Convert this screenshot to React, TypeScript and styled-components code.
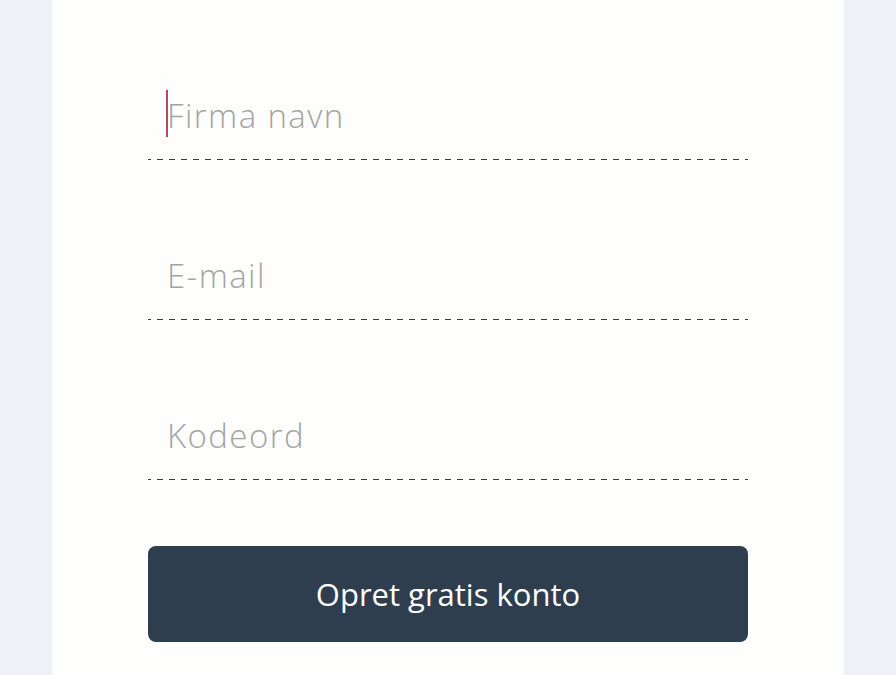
import styled, { createGlobalStyle } from 'styled-components';

const GlobalStyle = createGlobalStyle`
  html, body {
    margin: 0;
    padding: 0;
    background: #eef1f7;
    font-family: 'Open Sans', 'Liberation Sans', sans-serif;
  }
`;

const Page = styled.div`
  display: flex;
  justify-content: center;
  min-height: 675px;
`;

const Panel = styled.div`
  width: 792px;
  background: #fefefc;
  display: flex;
  justify-content: center;
`;

const Form = styled.form`
  width: 600px;
  padding-top: 80px;
  display: flex;
  flex-direction: column;
  row-gap: 80px;
`;

const Field = styled.div`
  height: 80px;
  padding-top: 11px;
  box-sizing: border-box;
  position: relative;
  background-image: linear-gradient(
    to right,
    #2e3e4f 0 6px,
    transparent 6px 12px
  );
  background-size: 12px 2px;
  background-repeat: repeat-x;
  background-position: 9px 79px;
`;

const Input = styled.input`
  display: block;
  box-sizing: border-box;
  width: 100%;
  height: 48px;
  border: none;
  outline: none;
  background: transparent;
  padding: 0 18px 0 19px;
  font-family: 'Open Sans', 'Liberation Sans', sans-serif;
  font-weight: 300;
  font-size: 33px;
  letter-spacing: 1.4px;
  color: #333;
  caret-color: #b5476d;
  &::placeholder {
    color: #a4a4a4;
  }
`;

const Caret = styled.span`
  position: absolute;
  left: 18px;
  top: 10px;
  width: 2px;
  height: 47px;
  background: #b5476d;
`;

const Submit = styled.button`
  margin-top: -14px;
  height: 96px;
  border: none;
  border-radius: 8px;
  background: #2e3e4f;
  color: #ffffff;
  font-family: 'Open Sans', 'Liberation Sans', sans-serif;
  font-weight: 400;
  font-size: 31px;
  cursor: pointer;
`;

const fields = [
  { name: 'company', placeholder: 'Firma navn', type: 'text' },
  { name: 'email', placeholder: 'E-mail', type: 'email' },
  { name: 'password', placeholder: 'Kodeord', type: 'password' },
];

export default function App() {
  return (
    <>
      <GlobalStyle />
      <Page>
        <Panel>
          <Form onSubmit={(e) => e.preventDefault()}>
            {fields.map((f, i) => (
              <Field key={f.name}>
                {i === 0 && <Caret />}
                <Input name={f.name} type={f.type} placeholder={f.placeholder} />
              </Field>
            ))}
            <Submit type="submit">Opret gratis konto</Submit>
          </Form>
        </Panel>
      </Page>
    </>
  );
}
